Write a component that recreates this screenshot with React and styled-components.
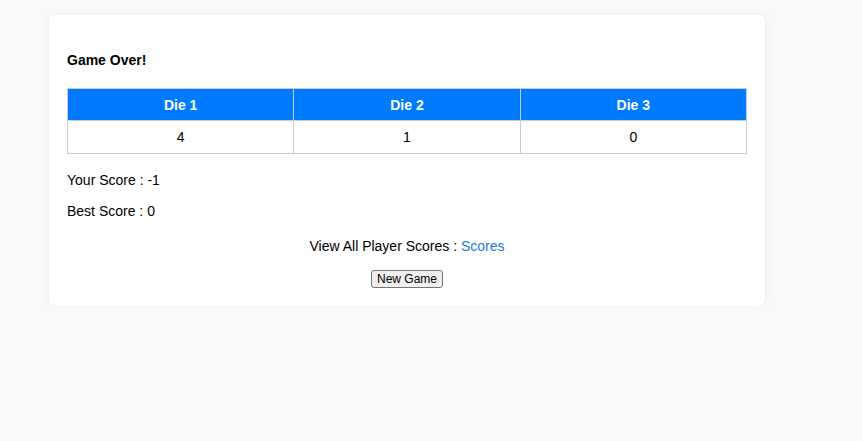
import React from "react";
import styled, { createGlobalStyle } from "styled-components";

const GlobalStyle = createGlobalStyle`
  body {
    margin: 0;
    background-color: #f8f9fa;
    font-family: "Liberation Sans", Arial, sans-serif;
    font-size: 14px;
    color: #000;
  }
`;

const dice = [4, 1, 0];

function App() {
  return (
    <>
      <GlobalStyle />
      <Page>
        <Card>
          <Title>Game Over!</Title>
          <DiceTable>
            <thead>
              <tr>
                {dice.map((_, i) => (
                  <th key={i}>Die {i + 1}</th>
                ))}
              </tr>
            </thead>
            <tbody>
              <tr>
                {dice.map((value, i) => (
                  <td key={i}>{value}</td>
                ))}
              </tr>
            </tbody>
          </DiceTable>
          <ScoreLine>Your Score : -1</ScoreLine>
          <ScoreLine>Best Score : 0</ScoreLine>
          <CenterLine>
            View All Player Scores : <ScoresLink href="#">Scores</ScoresLink>
          </CenterLine>
          <ButtonRow>
            <NewGameButton type="button">New Game</NewGameButton>
          </ButtonRow>
        </Card>
      </Page>
    </>
  );
}

const Page = styled.div`
  padding: 15px 0 0 49px;
`;

const Card = styled.div`
  width: 716px;
  box-sizing: border-box;
  padding: 18px 18px 17px 18px;
  background-color: #fff;
  border-radius: 6px;
  box-shadow: 0 0 10px rgba(0, 0, 0, 0.06);
`;

const Title = styled.div`
  margin: 19px 0 20px 0;
  font-weight: bold;
  line-height: 16px;
`;

const DiceTable = styled.table`
  width: 100%;
  border-collapse: collapse;
  text-align: center;
  th,
  td {
    border: 1px solid #ccc;
    line-height: 16px;
  }
  th {
    background-color: #007bff;
    color: #fff;
    font-weight: bold;
    height: 31px;
    padding: 0;
  }
  td {
    height: 32px;
    padding: 0;
  }
`;

const ScoreLine = styled.div`
  margin-top: 18px;
  line-height: 16px;
  & + & {
    margin-top: 15px;
  }
`;

const CenterLine = styled.div`
  margin-top: 19px;
  line-height: 16px;
  text-align: center;
`;

const ScoresLink = styled.a`
  color: #1c7cd6;
  text-decoration: none;
`;

const ButtonRow = styled.div`
  margin-top: 16px;
  display: flex;
  justify-content: center;
`;

const NewGameButton = styled.button`
  font-family: "Liberation Sans", Arial, sans-serif;
  font-size: 12px;
  line-height: 14px;
  padding: 1px 5px;
  color: #000;
  background-color: #efefef;
  border: 1px solid #767676;
  border-radius: 3px;
`;

export default App;
